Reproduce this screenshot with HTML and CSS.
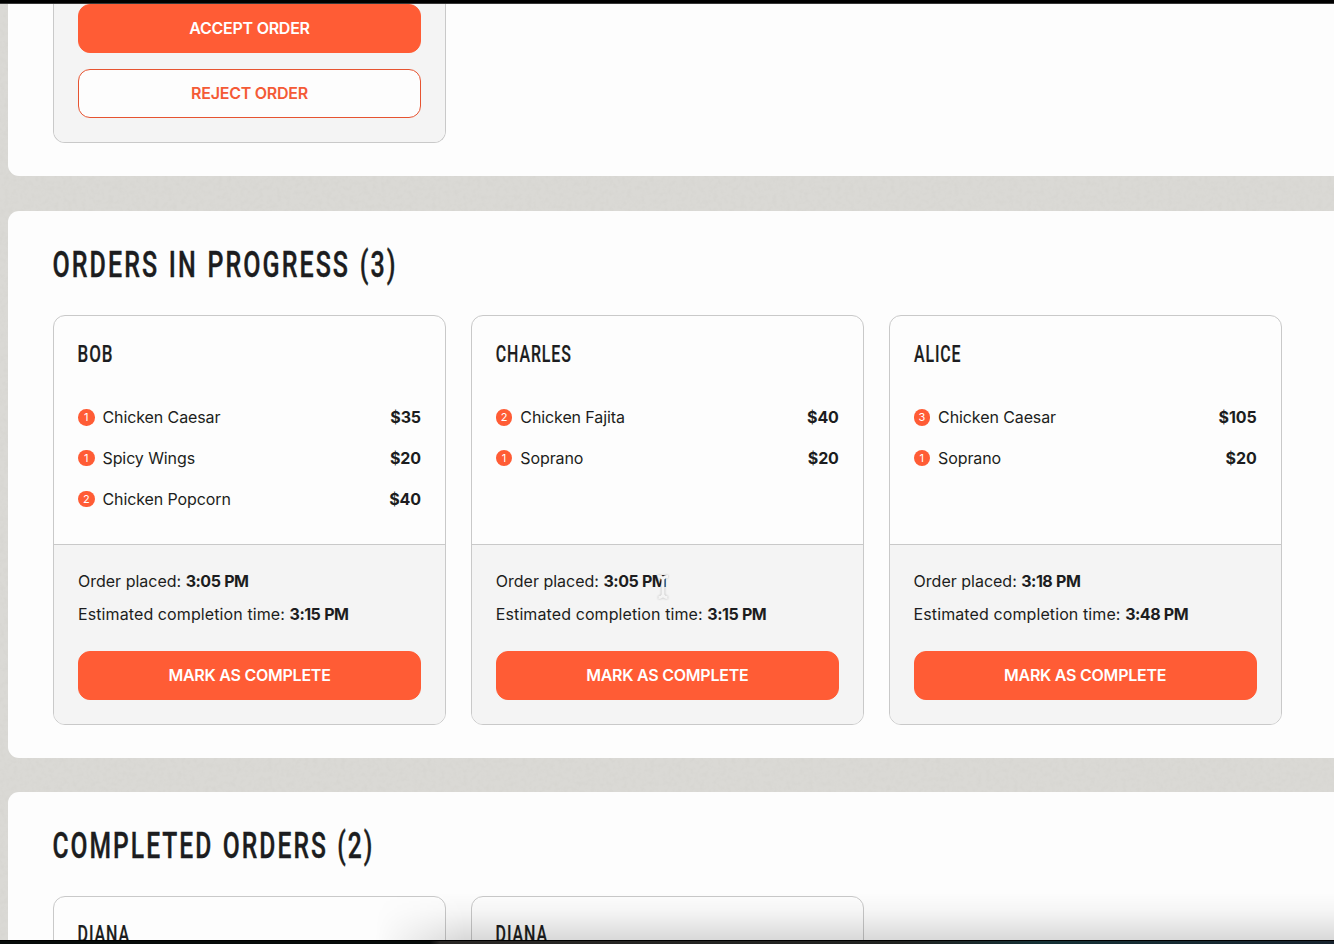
FILE: index.html
```html
<!DOCTYPE html>
<html lang="en">
<head>
<meta charset="utf-8">
<title>Restaurant orders</title>
<link rel="stylesheet" href="styles.css">
</head>
<body>
<main class="screen">
  <svg class="paper" aria-hidden="true"><filter id="grain" x="0" y="0" width="100%" height="100%"><feTurbulence type="fractalNoise" baseFrequency="0.22" numOctaves="3" seed="4"/><feColorMatrix values="0 0 0 0 .48  0 0 0 0 .47  0 0 0 0 .43  .22 0 0 0 -.09"/></filter><rect width="100%" height="100%" filter="url(#grain)"/></svg>
  <div class="sections">
    <section class="panel panel-new">
      <div class="cards">
        <article class="card">
          <div class="card-foot foot-new">
            <button class="btn"><span class="label">ACCEPT ORDER</span></button>
            <button class="btn btn-outline"><span class="label">REJECT ORDER</span></button>
          </div>
        </article>
      </div>
    </section>

    <section class="panel">
      <h2 class="title"><svg width="360" height="48"><text x="-0.5" y="33" textLength="345" lengthAdjust="spacingAndGlyphs">ORDERS IN PROGRESS (3)</text></svg></h2>
      <div class="cards">
        <article class="card">
          <div class="card-body">
            <h3 class="name"><svg width="120" height="30"><text x="-0.5" y="22" textLength="36" lengthAdjust="spacingAndGlyphs">BOB</text></svg></h3>
            <ul class="items">
              <li class="item"><span class="qty">1</span><span class="dish">Chicken Caesar</span><b class="price">$35</b></li>
              <li class="item"><span class="qty">1</span><span class="dish">Spicy Wings</span><b class="price">$20</b></li>
              <li class="item"><span class="qty">2</span><span class="dish">Chicken Popcorn</span><b class="price">$40</b></li>
            </ul>
          </div>
          <div class="card-foot">
            <p class="time">Order placed: <b>3:05 PM</b></p>
            <p class="time time-due">Estimated completion time: <b>3:15 PM</b></p>
            <button class="btn"><span class="label">MARK AS COMPLETE</span></button>
          </div>
        </article>
        <article class="card">
          <div class="card-body">
            <h3 class="name"><svg width="120" height="30"><text x="-0.2" y="22" textLength="76" lengthAdjust="spacingAndGlyphs">CHARLES</text></svg></h3>
            <ul class="items">
              <li class="item"><span class="qty">2</span><span class="dish">Chicken Fajita</span><b class="price">$40</b></li>
              <li class="item"><span class="qty">1</span><span class="dish">Soprano</span><b class="price">$20</b></li>
            </ul>
          </div>
          <div class="card-foot">
            <p class="time">Order placed: <b>3:05 PM</b></p>
            <p class="time time-due">Estimated completion time: <b>3:15 PM</b></p>
            <button class="btn"><span class="label">MARK AS COMPLETE</span></button>
          </div>
        </article>
        <article class="card">
          <div class="card-body">
            <h3 class="name"><svg width="120" height="30"><text x="0" y="22" textLength="47.5" lengthAdjust="spacingAndGlyphs">ALICE</text></svg></h3>
            <ul class="items">
              <li class="item"><span class="qty">3</span><span class="dish">Chicken Caesar</span><b class="price">$105</b></li>
              <li class="item"><span class="qty">1</span><span class="dish">Soprano</span><b class="price">$20</b></li>
            </ul>
          </div>
          <div class="card-foot">
            <p class="time">Order placed: <b>3:18 PM</b></p>
            <p class="time time-due">Estimated completion time: <b>3:48 PM</b></p>
            <button class="btn"><span class="label">MARK AS COMPLETE</span></button>
          </div>
        </article>
      </div>
    </section>

    <section class="panel panel-done">
      <h2 class="title"><svg width="360" height="48"><text x="-0.5" y="33" textLength="322" lengthAdjust="spacingAndGlyphs">COMPLETED ORDERS (2)</text></svg></h2>
      <div class="cards">
        <article class="card"><div class="card-body"><h3 class="name"><svg width="120" height="30"><text x="-0.5" y="21" textLength="52.5" lengthAdjust="spacingAndGlyphs">DIANA</text></svg></h3></div></article>
        <article class="card"><div class="card-body"><h3 class="name"><svg width="120" height="30"><text x="-0.5" y="21" textLength="52.5" lengthAdjust="spacingAndGlyphs">DIANA</text></svg></h3></div></article>
      </div>
    </section>
  </div>
  <svg class="cursor" width="18" height="26" viewBox="0 0 18 26"><path d="M4 2.5q4 0 5 2.5q1-2.5 5-2.5M9 5v16M4.500 23.500q3.500 0 4.500-2.500q1 2.500 4.500 2.500"/></svg>
  <div class="shade"></div>
  <div class="bar-top"></div>
  <div class="bar-bottom"></div>
</main>
</body>
</html>
```

FILE: styles.css
```css
* { box-sizing: border-box; }
body { margin: 0; }
h2, h3, p, ul { margin: 0; padding: 0; }

.screen {
  position: relative;
  width: 1334px;
  height: 944px;
  overflow: hidden;
  background: #dad9d5;
  color: #1c1d20;
  font: 16px/24.8px Inter, sans-serif;
}
.paper { position: absolute; inset: 0; width: 100%; height: 100%; }

.sections {
  position: relative;
  display: flex;
  flex-direction: column;
  gap: 34.6px;
  padding-left: 8px;
}
.panel {
  height: 547px;
  padding: 33px 0 33px 45px;
  border-radius: 11px 0 0 11px;
  background: #fdfdfd;
}
.panel-new { height: 176px; padding-top: 0; border-top-left-radius: 0; }
.panel-done { height: 170px; }

.title { height: 71.4px; }
.panel-done .title { height: 71px; }
.title svg, .name svg { display: block; overflow: visible; }
.title text { font: 500 36.5px Roboto, sans-serif; letter-spacing: 3px; word-spacing: 2px; fill: #1c1d20; stroke: #1c1d20; stroke-width: 0.4px; }
.name text { font: 500 23px Roboto, sans-serif; letter-spacing: 1.3px; fill: #1c1d20; stroke: #1c1d20; stroke-width: 0.2px; }

.cards { display: grid; grid-template-columns: repeat(3, 393px); gap: 24.8px; }
.card {
  display: flex;
  flex-direction: column;
  border: 1px solid #c9c9c9;
  border-radius: 12px;
  overflow: hidden;
}
.panel-new .card { height: 143.4px; border-top: 0; border-top-left-radius: 0; border-top-right-radius: 0; }
.card-body { flex: 1; padding: 24px 24px 32px; }
.name { height: 65.4px; }
.items { display: flex; flex-direction: column; gap: 16px; list-style: none; }
.item { display: flex; align-items: center; }
.qty {
  width: 16.5px;
  height: 16.5px;
  margin: 0 8px 1px 0;
  border-radius: 50%;
  background: #ff5c35;
  color: #fff;
  font-size: 11px;
  line-height: 16.5px;
  text-align: center;
}
.dish { flex: 1; letter-spacing: -0.1px; }
.price { font-weight: 700; letter-spacing: -0.1px; }

.card-foot {
  display: flex;
  flex-direction: column;
  gap: 8px;
  padding: 24px;
  border-top: 1px solid #c9c9c9;
  background: #f4f4f4;
}
.foot-new { gap: 16px; padding-top: 4px; border-top: 0; height: 143px; }
.time { letter-spacing: 0; }
.time-due { letter-spacing: 0.1px; }
.time b { font-weight: 700; letter-spacing: -0.5px; word-spacing: 0.5px; }
.btn {
  height: 49px;
  flex: none;
  margin: 16.5px 0 0;
  padding: 0 0 1px;
  border: 1px solid #ff5c35;
  border-radius: 12px;
  background: #ff5c35;
  color: #fff;
  font: 600 16px/1 Inter, sans-serif;
  letter-spacing: -0.25px;
}
.foot-new .btn { margin: 0; padding-bottom: 2px; }
.foot-new .btn-outline { border-color: #e65330; background: #fdfdfd; color: #f45a36; }

.cursor {
  position: absolute;
  left: 653.5px;
  top: 573.5px;
  fill: none;
  stroke: #f4f4f4;
  stroke-width: 3;
  filter: drop-shadow(0 0.5px 0.8px #0004);
}
.shade {
  position: absolute;
  left: 375px;
  right: 0;
  top: 893px;
  height: 47px;
  background: linear-gradient(#0000, #00000008 38%, #00000024);
  -webkit-mask-image: linear-gradient(90deg, transparent, #000 90px);
  mask-image: linear-gradient(90deg, transparent, #000 90px);
}
.bar-top { position: absolute; inset: 0 0 auto; height: 4px; background: linear-gradient(#000 75%, #373737 75%); }
.bar-bottom {
  position: absolute;
  inset: auto 0 0;
  height: 4px;
  border-top: 1px solid #000;
  background: linear-gradient(90deg, #070b0a 430px, #292725 440px, #202220 900px, #153136 1040px, #17232e 1334px);
}
```
